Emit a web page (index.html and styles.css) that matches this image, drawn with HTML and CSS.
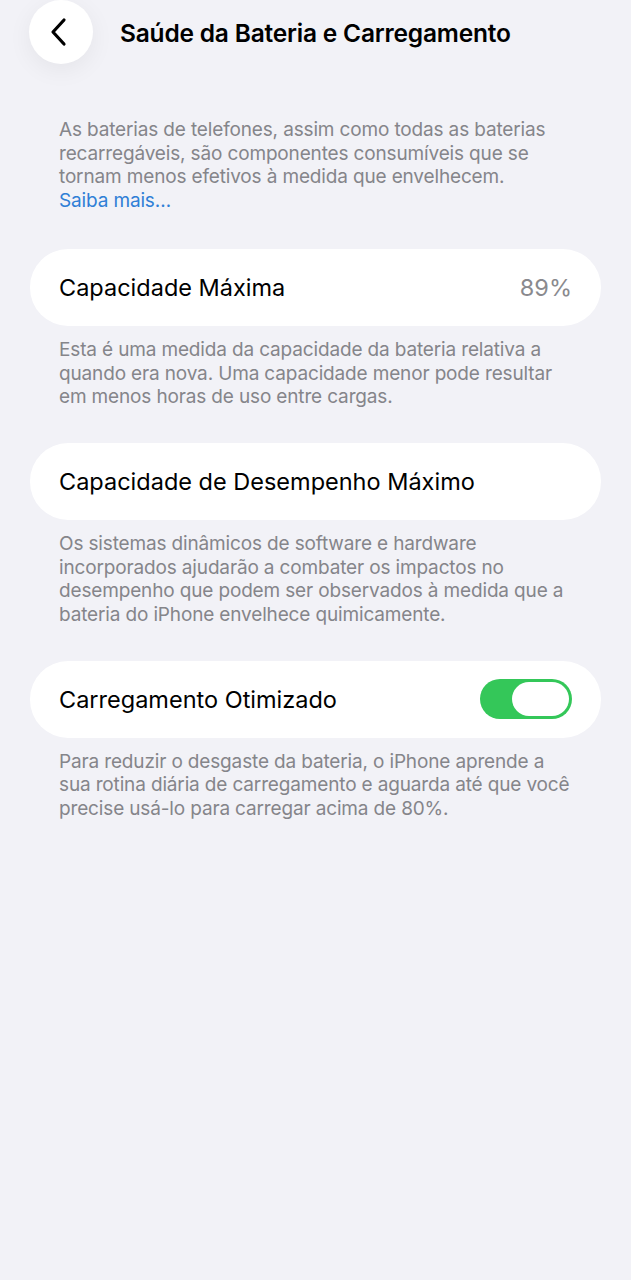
FILE: index.html
```html
<!DOCTYPE html>
<html lang="pt">
<head>
<meta charset="utf-8">
<link rel="stylesheet" href="styles.css">
</head>
<body>
<header class="nav">
  <div class="back">
    <svg width="22" height="30" viewBox="0 0 22 30"><path d="M16 3 L5 15 L16 27" fill="none" stroke="#000" stroke-width="3.2" stroke-linecap="round" stroke-linejoin="round"/></svg>
  </div>
  <h1 class="title">Saúde da Bateria e Carregamento</h1>
</header>
<main class="content">
  <p class="note intro">As baterias de telefones, assim como todas as baterias recarregáveis, são componentes consumíveis que se tornam menos efetivos à medida que envelhecem.<br><span class="link">Saiba mais…</span></p>

  <div class="card"><span class="label">Capacidade Máxima</span><span class="value">89%</span></div>
  <p class="note">Esta é uma medida da capacidade da bateria relativa a quando era nova. Uma capacidade menor pode resultar em menos horas de uso entre cargas.</p>

  <div class="card"><span class="label">Capacidade de Desempenho Máximo</span></div>
  <p class="note">Os sistemas dinâmicos de software e hardware incorporados ajudarão a combater os impactos no desempenho que podem ser observados à medida que a bateria do iPhone envelhece quimicamente.</p>

  <div class="card"><span class="label">Carregamento Otimizado</span><span class="toggle"><span class="knob"></span></span></div>
  <p class="note">Para reduzir o desgaste da bateria, o iPhone aprende a sua rotina diária de carregamento e aguarda até que você precise usá-lo para carregar acima de 80%.</p>
</main>
</body>
</html>
```
FILE: styles.css
```css
* { box-sizing: border-box; }
html, body { margin: 0; padding: 0; }
body {
  background: #f2f2f7;
  font-family: Inter, "Liberation Sans", sans-serif;
  width: 631px;
  min-height: 1280px;
  color: #000;
}
.nav {
  display: flex;
  align-items: center;
  height: 64px;
  padding-left: 29px;
}
.back {
  width: 64px;
  height: 64px;
  border-radius: 50%;
  background: #fff;
  box-shadow: 0 6px 24px rgba(0,0,0,0.06);
  display: flex;
  align-items: center;
  justify-content: center;
  padding-right: 4px;
}
.title {
  margin: 2px 0 0 27px;
  font-size: 24.5px;
  font-weight: 600;
  letter-spacing: -0.2px;
}
.content {
  padding: 54px 30px 0 30px;
}
.note {
  margin: 0;
  padding: 0 29px;
  font-size: 19px;
  line-height: 23.5px;
  color: #85858a;
  letter-spacing: -0.15px;
}
.intro { margin-bottom: 37px; }
.link { color: #2f7fd6; }
.card {
  height: 77px;
  border-radius: 38px;
  background: #fff;
  display: flex;
  align-items: center;
  justify-content: space-between;
  padding: 0 29px;
  margin-bottom: 12px;
}
.card + .note { margin-bottom: 34.5px; }
.label { font-size: 23.5px; letter-spacing: 0; }
.value { font-size: 23.5px; color: #8a8a8e; }
.toggle {
  width: 92px;
  height: 40px;
  border-radius: 20px;
  background: #34c759;
  padding: 3px;
  display: flex;
  justify-content: flex-end;
}
.knob {
  width: 57px;
  height: 34px;
  border-radius: 17px;
  background: #fff;
}
```
